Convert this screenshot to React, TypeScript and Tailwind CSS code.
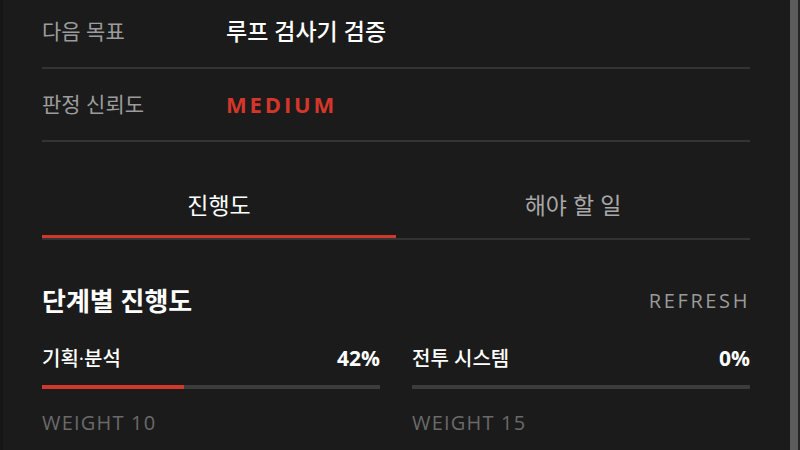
import React from "react";

const font = { fontFamily: '"Open Sans", "Noto Sans CJK KR", sans-serif' };

function InfoRow({ label, children }: { label: string; children: React.ReactNode }) {
  return (
    <div className="flex h-[73px] items-center border-b-2 border-[#343434]">
      <div className="w-[184px] text-[21px] text-[#9c9c9c]">{label}</div>
      <div>{children}</div>
    </div>
  );
}

function Stage({ name, pct, weight }: { name: string; pct: number; weight: number }) {
  return (
    <div className="flex flex-col">
      <div className="flex h-[26px] items-center justify-between">
        <span className="text-[20px] font-medium text-white">{name}</span>
        <span className="text-[21px] font-bold text-white">{pct}%</span>
      </div>
      <div className="mt-[13px] h-[4px] w-full bg-[#3c3c3c]">
        <div className="h-full bg-[#d0382c]" style={{ width: `${pct}%` }} />
      </div>
      <div className="mt-[21px] h-[26px] text-[20px] leading-[26px] tracking-[0.06em] text-[#6a6a6a]">
        WEIGHT {weight}
      </div>
    </div>
  );
}

export default function App() {
  return (
    <div className="flex h-[450px] w-[800px] overflow-hidden bg-[#1b1b1b]" style={font}>
      <div className="w-[3px] shrink-0 bg-[#161616]" />
      <div className="flex-1 pl-[39px] pr-[40px]">
        <div className="-mt-[4px]">
          <InfoRow label="다음 목표">
            <span className="text-[23px] font-medium text-white">루프 검사기 검증</span>
          </InfoRow>
          <InfoRow label="판정 신뢰도">
            <span className="text-[22px] font-bold tracking-[0.13em] text-[#d5362b]">MEDIUM</span>
          </InfoRow>
        </div>

        <div className="mt-[30px] flex border-b-2 border-[#333333]">
          <button className="flex-1 border-b-[3px] border-[#d0382c] pt-[18px] pb-[15px] text-[23px] leading-[30px] text-white">
            진행도
          </button>
          <button className="flex-1 border-b-[3px] border-transparent pt-[18px] pb-[15px] text-[23px] leading-[30px] text-[#a8a8a8]">
            해야 할 일
          </button>
        </div>

        <div className="mt-[45px] flex h-[32px] items-center justify-between">
          <span className="text-[26px] font-bold text-white">단계별 진행도</span>
          <span className="text-[20px] tracking-[0.13em] text-[#9a9a9a]">REFRESH</span>
        </div>

        <div className="mt-[29px] grid grid-cols-2 gap-x-[32px]">
          <Stage name="기획·분석" pct={42} weight={10} />
          <Stage name="전투 시스템" pct={0} weight={15} />
        </div>
      </div>
      <div className="w-[8px] shrink-0 bg-[#5c5c5c]" />
      <div className="w-[2px] shrink-0 bg-[#262626]" />
    </div>
  );
}
